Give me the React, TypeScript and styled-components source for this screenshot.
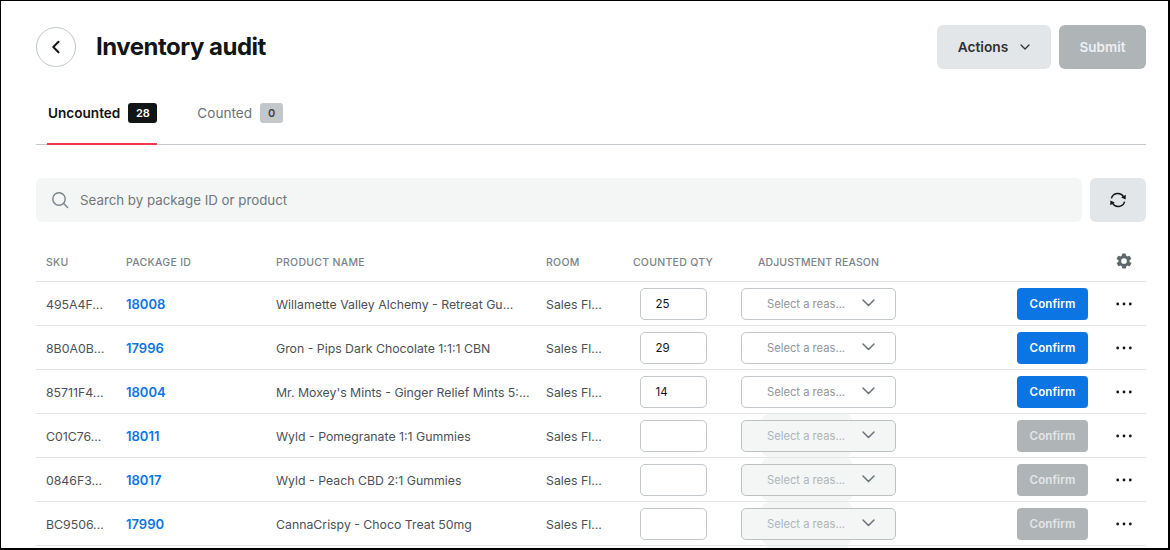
import React from "react";
import styled, { createGlobalStyle } from "styled-components";

const Global = createGlobalStyle`
  html, body { margin: 0; padding: 0; background: #fff; }
  body { font-family: Inter, "Noto Sans", sans-serif; color: #121516; }
  * { box-sizing: border-box; }
`;

const Frame = styled.div`
  width: 1170px;
  height: 550px;
  border: 1px solid #000;
  border-width: 1px 2px 2px 1px;
  overflow: hidden;
  padding: 24px 22px 0 35px;
`;

const Header = styled.header`
  display: flex;
  align-items: center;
  justify-content: space-between;
  height: 44px;
`;

const TitleGroup = styled.div`
  display: flex;
  align-items: center;
  gap: 20px;
`;

const BackButton = styled.button`
  width: 40px;
  height: 40px;
  border-radius: 50%;
  border: 1px solid #c1c7ca;
  background: #fff;
  padding: 0;
  display: flex;
  align-items: center;
  justify-content: center;
`;

const Title = styled.h1`
  margin: 0;
  font-size: 24px;
  line-height: 32px;
  font-weight: 700;
  letter-spacing: -0.5px;
  color: #121516;
`;

const HeaderActions = styled.div`
  display: flex;
  gap: 8px;
`;

const ActionsButton = styled.button`
  width: 114px;
  height: 44px;
  border: 0;
  border-radius: 6px;
  background: #e3e6e9;
  color: #2c3236;
  font: 600 13.75px Inter, sans-serif;
  display: flex;
  align-items: center;
  justify-content: center;
  gap: 12px;
`;

const SubmitButton = styled.button`
  width: 87px;
  height: 44px;
  border: 0;
  border-radius: 6px;
  background: #afb5b7;
  color: #eef0f1;
  font: 600 13.5px Inter, sans-serif;
`;

const Tabs = styled.nav`
  display: flex;
  height: 76px;
  padding-left: 11px;
  gap: 39px;
  border-bottom: 1px solid #c1c7ca;
`;

const Tab = styled.div<{ $active?: boolean }>`
  display: flex;
  align-items: center;
  gap: 8px;
  height: 76px;
  font-size: 13.6px;
  font-weight: ${(p) => (p.$active ? 600 : 400)};
  color: ${(p) => (p.$active ? "#121516" : "#6a7377")};
  border-bottom: ${(p) => (p.$active ? "2px solid #f0394d" : "0")};
  padding-left: 1px;
  padding-top: ${(p) => (p.$active ? "14px" : "12px")};
`;

const Count = styled.span<{ $active?: boolean }>`
  height: 20px;
  min-width: 23px;
  width: ${(p) => (p.$active ? "29px" : "23px")};
  border-radius: 3px;
  background: ${(p) => (p.$active ? "#121516" : "#c1c7ca")};
  color: ${(p) => (p.$active ? "#fff" : "#3d4447")};
  font-size: 11px;
  font-weight: 600;
  display: flex;
  align-items: center;
  justify-content: center;
`;

const SearchRow = styled.div`
  display: flex;
  gap: 8px;
  margin-top: 33px;
`;

const SearchBox = styled.div`
  flex: 1;
  height: 44px;
  border-radius: 6px;
  background: #f4f6f6;
  display: flex;
  align-items: center;
  padding-left: 15px;
  gap: 11px;
  color: #6f787c;
  font-size: 13.3px;
`;

const RefreshButton = styled.button`
  width: 56px;
  height: 44px;
  border: 0;
  border-radius: 6px;
  background: #e3e6e9;
  padding: 0;
  display: flex;
  align-items: center;
  justify-content: center;
`;

const COLS = "80px 150px 270px 70px 114px 1fr 71px 58px";

const HeadRow = styled.div`
  display: grid;
  grid-template-columns: ${COLS};
  align-items: center;
  height: 60px;
  padding: 21px 0 0 10px;
  border-bottom: 1px solid #e3e6e9;
  color: #7a8387;
  font-size: 10.5px;
  font-weight: 500;
  letter-spacing: 0.28px;
  text-transform: uppercase;
`;

const HeadCell = styled.div`
  white-space: nowrap;
`;

const QtyHead = styled(HeadCell)`
  text-align: center;
`;

const ReasonHead = styled(HeadCell)`
  padding-left: 28px;
  letter-spacing: 0.1px;
`;

const GearCell = styled.div`
  grid-column: 8;
  display: flex;
  justify-content: flex-end;
  padding-right: 13px;
  margin-top: -2px;
`;

const Row = styled.div`
  display: grid;
  grid-template-columns: ${COLS};
  align-items: center;
  height: 44px;
  padding-left: 10px;
  border-bottom: 1px solid #e3e6e9;
  font-size: 12.3px;
  color: #4a5256;
`;

const Cell = styled.div`
  white-space: nowrap;
  overflow: hidden;
  text-overflow: ellipsis;
  padding-right: 10px;
`;

const TextCell = styled(Cell)`
  padding-top: 1px;
`;

const PackageLink = styled.a`
  color: #0a75e3;
  font-size: 13px;
  font-weight: 600;
`;

const QtyCell = styled.div`
  display: flex;
  justify-content: center;
`;

const QtyInput = styled.div`
  width: 67px;
  height: 32px;
  border: 1px solid #c1c7ca;
  border-radius: 5px;
  background: #fff;
  display: flex;
  align-items: center;
  padding: 1px 0 0 15px;
  font-size: 11.5px;
  color: #121516;
`;

const ReasonCell = styled.div<{ $disabled?: boolean }>`
  position: relative;
  grid-column: 6;
  height: 43px;
  display: flex;
  align-items: center;
  padding-left: 11px;
  ${(p) =>
    p.$disabled
      ? `&::before {
    content: "";
    position: absolute;
    left: 31px;
    top: 0;
    width: 92px;
    height: 43px;
    border-radius: 8px;
    background: #f4f6f6;
  }`
      : ""}
`;

const Select = styled.div<{ $disabled?: boolean }>`
  position: relative;
  width: 155px;
  height: 32px;
  border: 1px solid ${(p) => (p.$disabled ? "#bcc1c3" : "#c1c7ca")};
  border-radius: 5px;
  background: ${(p) => (p.$disabled ? "#f4f6f6" : "#fff")};
  display: flex;
  align-items: center;
  justify-content: space-between;
  padding: 0 20px 0 25px;
  font-size: 11.2px;
  color: ${(p) => (p.$disabled ? "#afb5b7" : "#8f979b")};
`;

const SelectChevron = styled.svg`
  margin-bottom: 1px;
`;

const ConfirmButton = styled.button<{ $disabled?: boolean }>`
  grid-column: 7;
  width: 71px;
  height: 32px;
  border: 0;
  border-radius: 4px;
  background: ${(p) => (p.$disabled ? "#afb5b7" : "#0a75e3")};
  color: ${(p) => (p.$disabled ? "#e3e6e9" : "#fff")};
  font: 600 11.5px Inter, sans-serif;
  letter-spacing: 0.1px;
  padding: 1px 0 0;
`;

const DotsCell = styled.div`
  display: flex;
  justify-content: flex-end;
  padding-right: 14px;
`;

const rows = [
  ["495A4F...", "18008", "Willamette Valley Alchemy - Retreat Gu...", "25"],
  ["8B0A0B...", "17996", "Gron - Pips Dark Chocolate 1:1:1 CBN", "29"],
  ["85711F4...", "18004", "Mr. Moxey's Mints - Ginger Relief Mints 5:...", "14"],
  ["C01C76...", "18011", "Wyld - Pomegranate 1:1 Gummies", ""],
  ["0846F3...", "18017", "Wyld - Peach CBD 2:1 Gummies", ""],
  ["BC9506...", "17990", "CannaCrispy - Choco Treat 50mg", ""],
];

export default function App() {
  return (
    <Frame>
      <Global />
      <Header>
        <TitleGroup>
          <BackButton aria-label="Back">
            <svg width="12" height="14" viewBox="0 0 12 14" fill="none">
              <path d="M8.5 1.8 3.3 7l5.2 5.2" stroke="#121516" strokeWidth="2" strokeLinecap="round" strokeLinejoin="round" />
            </svg>
          </BackButton>
          <Title>Inventory audit</Title>
        </TitleGroup>
        <HeaderActions>
          <ActionsButton>
            Actions
            <svg width="10" height="6" viewBox="0 0 10 6" fill="none">
              <path d="M1 1 5 5l4-4" stroke="#2c3236" strokeWidth="1.3" strokeLinecap="round" strokeLinejoin="round" />
            </svg>
          </ActionsButton>
          <SubmitButton>Submit</SubmitButton>
        </HeaderActions>
      </Header>
      <Tabs>
        <Tab $active>
          Uncounted <Count $active>28</Count>
        </Tab>
        <Tab>
          Counted <Count>0</Count>
        </Tab>
      </Tabs>
      <SearchRow>
        <SearchBox>
          <svg width="18" height="18" viewBox="0 0 18 18" fill="none">
            <circle cx="8" cy="8" r="6.2" stroke="#7a8387" strokeWidth="1.4" />
            <path d="m12.6 12.6 4 4" stroke="#7a8387" strokeWidth="1.4" strokeLinecap="round" />
          </svg>
          Search by package ID or product
        </SearchBox>
        <RefreshButton aria-label="Refresh">
          <svg width="18" height="18" viewBox="0 0 18 18" fill="none">
            <path d="M2.4 7.4A6.7 6.7 0 0 1 14.6 5.8" stroke="#121516" strokeWidth="1.5" />
            <path d="M15.6 10.6A6.7 6.7 0 0 1 3.4 12.2" stroke="#121516" strokeWidth="1.5" />
            <path d="M16.8 3.8 16.6 8.6 12.2 6.6Z M1.2 14.2 1.4 9.4 5.8 11.4Z" fill="#121516" />
          </svg>
        </RefreshButton>
      </SearchRow>
      <HeadRow>
        <HeadCell>SKU</HeadCell>
        <HeadCell>Package ID</HeadCell>
        <HeadCell>Product name</HeadCell>
        <HeadCell>Room</HeadCell>
        <QtyHead>Counted QTY</QtyHead>
        <ReasonHead>Adjustment reason</ReasonHead>
        <GearCell>
          <svg width="18" height="18" viewBox="0 0 24 24" fill="#5f686c">
            <path
              fillRule="evenodd"
              d="M19.4 13a7.6 7.6 0 0 0 0-2l2.1-1.6a.5.5 0 0 0 .1-.6l-2-3.5a.5.5 0 0 0-.6-.2l-2.5 1a7.3 7.3 0 0 0-1.7-1l-.4-2.6a.5.5 0 0 0-.5-.5h-4a.5.5 0 0 0-.5.5l-.4 2.6a7.3 7.3 0 0 0-1.7 1l-2.5-1a.5.5 0 0 0-.6.2l-2 3.5a.5.5 0 0 0 .1.6L4.6 11a7.6 7.6 0 0 0 0 2l-2.1 1.6a.5.5 0 0 0-.1.6l2 3.5c.1.2.4.3.6.2l2.5-1a7.3 7.3 0 0 0 1.7 1l.4 2.6c0 .3.2.5.5.5h4c.3 0 .5-.2.5-.5l.4-2.6a7.3 7.3 0 0 0 1.7-1l2.5 1c.2.1.5 0 .6-.2l2-3.5a.5.5 0 0 0-.1-.6ZM12 15.8a3.8 3.8 0 1 1 0-7.6 3.8 3.8 0 0 1 0 7.6Z"
            />
          </svg>
        </GearCell>
      </HeadRow>
      {rows.map(([sku, id, name, qty]) => {
        const disabled = qty === "";
        return (
          <Row key={id}>
            <TextCell>{sku}</TextCell>
            <Cell>
              <PackageLink>{id}</PackageLink>
            </Cell>
            <TextCell>{name}</TextCell>
            <TextCell>Sales Fl...</TextCell>
            <QtyCell>
              <QtyInput>{qty}</QtyInput>
            </QtyCell>
            <ReasonCell $disabled={disabled}>
              <Select $disabled={disabled}>
                Select a reas...
                <SelectChevron width="13" height="8" viewBox="0 0 13 8" fill="none">
                  <path d="M1 1l5.5 5.5L12 1" stroke="#6a7377" strokeWidth="1.5" strokeLinecap="round" strokeLinejoin="round" />
                </SelectChevron>
              </Select>
            </ReasonCell>
            <ConfirmButton $disabled={disabled}>Confirm</ConfirmButton>
            <DotsCell>
              <svg width="16" height="4" viewBox="0 0 16 4" fill="#121516">
                <circle cx="1.7" cy="2" r="1.4" />
                <circle cx="8" cy="2" r="1.4" />
                <circle cx="14.3" cy="2" r="1.4" />
              </svg>
            </DotsCell>
          </Row>
        );
      })}
      <Row>
        <ReasonCell $disabled />
      </Row>
    </Frame>
  );
}
